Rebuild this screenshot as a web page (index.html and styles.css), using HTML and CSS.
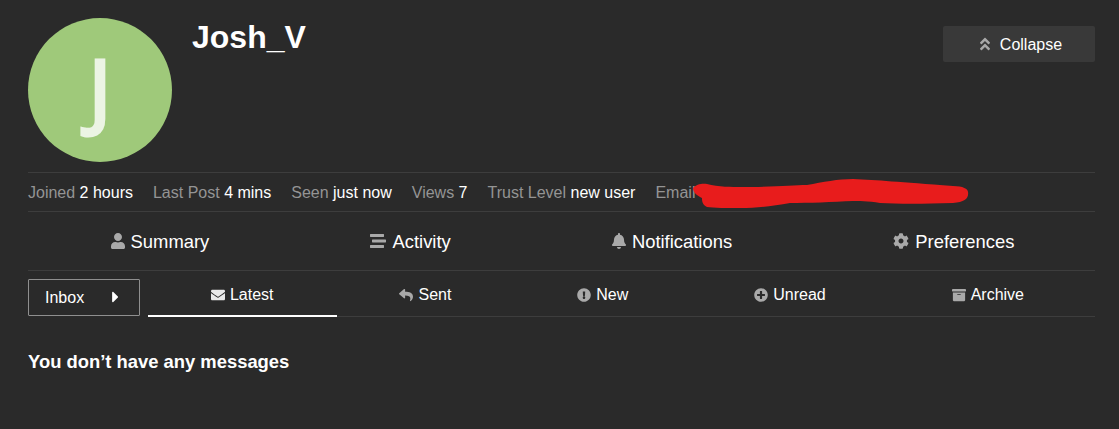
FILE: index.html
```html
<!DOCTYPE html>
<html lang="en">
<head>
<meta charset="utf-8">
<title>Josh_V</title>
<link rel="stylesheet" href="styles.css">
</head>
<body>
<main class="page">
  <header class="head">
    <div class="avatar">J</div>
    <h1 class="name">Josh_V</h1>
    <button class="collapse">
      <svg class="icon" viewBox="0 0 320 512"><path d="M177 255.7l136 136c9.4 9.4 9.4 24.6 0 33.9l-22.6 22.6c-9.4 9.4-24.6 9.4-33.9 0L160 351.9l-96.4 96.4c-9.4 9.4-24.6 9.4-33.9 0L7 425.7c-9.4-9.4-9.4-24.6 0-33.9l136-136c9.4-9.5 24.6-9.5 34-.1zm-34-192L7 199.7c-9.4 9.4-9.4 24.6 0 33.9l22.6 22.6c9.4 9.4 24.6 9.4 33.9 0l96.4-96.4 96.4 96.4c9.4 9.4 24.6 9.4 33.9 0l22.6-22.6c9.4-9.4 9.4-24.6 0-33.9l-136-136c-9.2-9.4-24.4-9.4-33.8 0z"/></svg>
      Collapse
    </button>
  </header>

  <section class="stats">
    <span class="stat">Joined <b>2 hours</b></span>
    <span class="stat">Last Post <b>4 mins</b></span>
    <span class="stat">Seen <b>just now</b></span>
    <span class="stat">Views <b>7</b></span>
    <span class="stat">Trust Level <b>new user</b></span>
    <span class="stat">Email</span>
    <svg class="scribble" viewBox="0 0 280 32"><path d="M0 10C3 6 10 5 14 6C25 9 40 9 47 9C80 9 100 7 114 7C130 4 145 1 160 1C185 2 205 4 260 8C270 8 275 11 275 14C276 20 272 24 260 25C230 26 205 26 187 25C175 23 165 23 160 23C140 24 115 25 97 25C80 28 65 30 47 30C35 30 20 30 14 29C9 27 9 22 9 20C5 18 0 15 0 10Z"/></svg>
  </section>

  <nav class="nav">
    <a class="nav-item">
      <svg class="icon narrow" viewBox="0 0 448 512"><path d="M224 256c70.7 0 128-57.3 128-128S294.7 0 224 0 96 57.3 96 128s57.3 128 128 128zm89.6 32h-16.7c-22.2 10.2-46.9 16-72.9 16s-50.6-5.8-72.9-16h-16.7C60.2 288 0 348.2 0 422.4V464c0 26.5 21.5 48 48 48h352c26.5 0 48-21.5 48-48v-41.6c0-74.2-60.2-134.4-134.4-134.4z"/></svg>
      Summary</a>
    <a class="nav-item">
      <svg class="icon" viewBox="0 0 512 512"><path d="M16 128h416c8.84 0 16-7.16 16-16V48c0-8.84-7.16-16-16-16H16C7.16 32 0 39.16 0 48v64c0 8.84 7.16 16 16 16zm480 80H80c-8.84 0-16 7.16-16 16v64c0 8.84 7.16 16 16 16h416c8.84 0 16-7.16 16-16v-64c0-8.84-7.16-16-16-16zm-64 176H16c-8.84 0-16 7.16-16 16v64c0 8.84 7.16 16 16 16h416c8.84 0 16-7.16 16-16v-64c0-8.84-7.16-16-16-16z"/></svg>
      Activity</a>
    <a class="nav-item">
      <svg class="icon narrow" viewBox="0 0 448 512"><path d="M224 512c35.32 0 63.97-28.65 63.97-64H160.03c0 35.35 28.65 64 63.97 64zm215.39-149.71c-19.32-20.76-55.47-51.99-55.47-154.29 0-77.7-54.48-139.9-127.94-155.16V32c0-17.67-14.32-32-31.98-32s-31.98 14.33-31.98 32v20.84C118.56 68.1 64.08 130.3 64.08 208c0 102.3-36.15 133.53-55.47 154.29-6 6.45-8.66 14.16-8.61 21.71.11 16.4 12.98 32 32.1 32h383.8c19.12 0 32-15.6 32.1-32 .05-7.55-2.61-15.27-8.61-21.71z"/></svg>
      Notifications</a>
    <a class="nav-item">
      <svg class="icon" viewBox="0 0 512 512"><path d="M487.4 315.7l-42.6-24.6c4.3-23.2 4.3-47 0-70.2l42.6-24.6c4.9-2.8 7.1-8.6 5.5-14-11.1-35.6-30-67.8-54.7-94.6-3.8-4.1-10-5.1-14.8-2.3L380.8 110c-17.9-15.4-38.5-27.3-60.8-35.1V25.8c0-5.6-3.9-10.5-9.4-11.7-36.7-8.2-74.3-7.8-109.2 0-5.5 1.2-9.4 6.1-9.4 11.7V75c-22.2 7.9-42.8 19.8-60.8 35.1L88.7 85.5c-4.9-2.8-11-1.9-14.8 2.3-24.7 26.7-43.6 58.9-54.7 94.6-1.7 5.4.6 11.2 5.5 14L67.3 221c-4.3 23.2-4.3 47 0 70.2l-42.6 24.6c-4.9 2.8-7.1 8.6-5.5 14 11.1 35.6 30 67.8 54.7 94.6 3.8 4.1 10 5.1 14.8 2.3l42.6-24.6c17.9 15.4 38.5 27.3 60.8 35.1v49.2c0 5.6 3.9 10.5 9.4 11.7 36.7 8.2 74.3 7.8 109.2 0 5.5-1.2 9.4-6.1 9.4-11.7v-49.2c22.2-7.9 42.8-19.8 60.8-35.1l42.6 24.6c4.9 2.8 11 1.9 14.8-2.3 24.7-26.7 43.6-58.9 54.7-94.6 1.5-5.5-.7-11.3-5.6-14.1zM256 336c-44.1 0-80-35.9-80-80s35.9-80 80-80 80 35.9 80 80-35.9 80-80 80z"/></svg>
      Preferences</a>
  </nav>

  <section class="messages">
    <button class="inbox">Inbox
      <svg class="caret" viewBox="0 0 192 512"><path d="M0 384.662V127.338c0-17.818 21.543-26.741 34.142-14.142l128.662 128.662c7.81 7.81 7.81 20.474 0 28.284L34.142 398.804C21.543 411.404 0 402.48 0 384.662z"/></svg>
    </button>
    <div class="tabs">
      <a class="tab active">
        <svg class="icon" viewBox="0 0 512 512"><path d="M502.3 190.8c3.9-3.1 9.7-.2 9.7 4.7V400c0 26.5-21.5 48-48 48H48c-26.5 0-48-21.5-48-48V195.6c0-5 5.7-7.8 9.7-4.7 22.4 17.4 52.1 39.5 154.1 113.6 21.1 15.4 56.7 47.8 92.2 47.6 35.7.3 72-32.8 92.3-47.6 102-74.1 131.6-96.3 154-113.7zM256 320c23.2.4 56.6-29.2 73.4-41.4 132.7-96.3 142.8-104.7 173.4-128.7 5.8-4.5 9.2-11.5 9.2-18.9v-19c0-26.5-21.5-48-48-48H48C21.5 64 0 85.5 0 112v19c0 7.4 3.4 14.3 9.2 18.9 30.6 23.9 40.7 32.4 173.4 128.7 16.8 12.2 50.2 41.8 73.4 41.4z"/></svg>
        Latest</a>
      <a class="tab">
        <svg class="icon" viewBox="0 0 512 512"><path d="M8.309 189.836L184.313 37.851C199.719 24.546 224 35.347 224 56.015v80.053c160.629 1.839 288 34.032 288 186.258 0 61.441-39.581 122.309-83.333 154.132-13.653 9.931-33.111-2.533-28.077-18.631 45.344-145.012-21.507-183.51-176.59-185.742V360c0 20.7-24.3 31.453-39.687 18.164l-176.004-152c-11.071-9.562-11.086-26.753 0-36.328z"/></svg>
        Sent</a>
      <a class="tab">
        <svg class="icon" viewBox="0 0 512 512"><path d="M504 256c0 136.997-111.043 248-248 248S8 392.997 8 256C8 119.083 119.043 8 256 8s248 111.083 248 248zm-248 50c-25.405 0-46 20.595-46 46s20.595 46 46 46 46-20.595 46-46-20.595-46-46-46zm-43.673-165.346l7.418 136c.347 6.364 5.609 11.346 11.982 11.346h48.546c6.373 0 11.635-4.982 11.982-11.346l7.418-136c.375-6.874-5.098-12.654-11.982-12.654h-63.383c-6.884 0-12.356 5.78-11.981 12.654z"/></svg>
        New</a>
      <a class="tab">
        <svg class="icon" viewBox="0 0 512 512"><path d="M256 8C119 8 8 119 8 256s111 248 248 248 248-111 248-248S393 8 256 8zm144 276c0 6.6-5.4 12-12 12h-92v92c0 6.6-5.4 12-12 12h-56c-6.6 0-12-5.4-12-12v-92h-92c-6.6 0-12-5.4-12-12v-56c0-6.6 5.4-12 12-12h92v-92c0-6.6 5.4-12 12-12h56c6.6 0 12 5.4 12 12v92h92c6.6 0 12 5.4 12 12v56z"/></svg>
        Unread</a>
      <a class="tab">
        <svg class="icon" viewBox="0 0 512 512"><path d="M32 448c0 17.7 14.3 32 32 32h384c17.7 0 32-14.3 32-32V160H32v288zm160-212c0-6.6 5.4-12 12-12h104c6.6 0 12 5.4 12 12v8c0 6.6-5.4 12-12 12H204c-6.6 0-12-5.4-12-12v-8zM480 32H32C14.3 32 0 46.3 0 64v48c0 8.8 7.2 16 16 16h480c8.8 0 16-7.2 16-16V64c0-17.7-14.3-32-32-32z"/></svg>
        Archive</a>
    </div>
  </section>

  <p class="empty">You don’t have any messages</p>
</main>
</body>
</html>
```
FILE: styles.css
```css
* { box-sizing: border-box; }
html, body { margin: 0; height: 100%; }
body {
  background: #2a2a2a;
  color: #fff;
  font-family: "Liberation Sans", Arial, sans-serif;
  font-size: 16px;
  overflow: hidden;
}
.page { padding: 18px 24px 0 28px; }
.icon { fill: #a9a9a9; width: 16px; height: 16px; flex: none; }
.icon.narrow { width: 14px; }

.head { display: flex; align-items: flex-start; height: 154px; }
.avatar {
  width: 144px; height: 144px; flex: none;
  border-radius: 50%;
  background: #9fc97a;
  color: #ecf4e4;
  font-family: "Noto Sans", "Open Sans", sans-serif;
  font-size: 84px; line-height: 139px;
  -webkit-text-stroke: 3px #ecf4e4;
  text-align: center;
}
.name { margin: 0 0 0 20px; font-size: 32px; line-height: 38px; font-weight: 700; flex: 1; }
.collapse {
  width: 152px; height: 36px; margin-top: 8px;
  display: flex; align-items: center; justify-content: center; gap: 10px;
  padding: 2px 0 0 4px;
  background: #393939; border: 0; border-radius: 2px;
  color: #fff; font: inherit;
}
.collapse .icon { width: 10px; height: 16px; margin-top: -2px; }

.stats {
  position: relative;
  display: flex; align-items: center; gap: 20px;
  height: 40px;
  padding-top: 2px;
  border-top: 1px solid #3d3d3d;
  border-bottom: 1px solid #3d3d3d;
  color: #949494;
}
.stat b { color: #fff; font-weight: 400; }
.scribble {
  position: absolute; left: 665px; top: 5px;
  width: 280px; height: 32px; fill: #e81c1c;
}

.nav {
  display: flex; align-items: center; height: 59px;
  padding: 2px 0 0 2px;
  border-bottom: 1px solid #3d3d3d;
  font-size: 18.4px;
}
.nav-item {
  flex: 1 1 auto;
  display: flex; align-items: center; justify-content: center; gap: 6px;
}
.nav-item .icon { margin-top: -2px; }

.messages { display: flex; align-items: stretch; height: 46px; }
.inbox {
  width: 112px; height: 37px; margin-top: 8px; margin-right: 8px; flex: none;
  display: flex; align-items: center; justify-content: space-between;
  padding: 0 20px 0 16px;
  background: transparent; border: 1px solid #8f8f8f; border-radius: 1px;
  color: #fff; font: inherit;
}
.caret { width: 7px; height: 18px; fill: #fff; margin-top: -1px; }
.tabs {
  flex: 1; display: flex;
  padding-right: 8px;
  border-bottom: 1px solid #3d3d3d;
}
.tab {
  flex: 1 1 auto;
  display: flex; align-items: center; justify-content: center; gap: 5px;
  padding-top: 3px;
  margin-bottom: -1px;
  border-bottom: 2px solid transparent;
}
.tab .icon { width: 14px; height: 14px; }
.tab.active { border-bottom-color: #fff; }
.tab.active .icon { fill: #e9e9e9; }

.empty { margin: 34px 0 0; font-size: 18.4px; line-height: 21px; font-weight: 700; }
```
